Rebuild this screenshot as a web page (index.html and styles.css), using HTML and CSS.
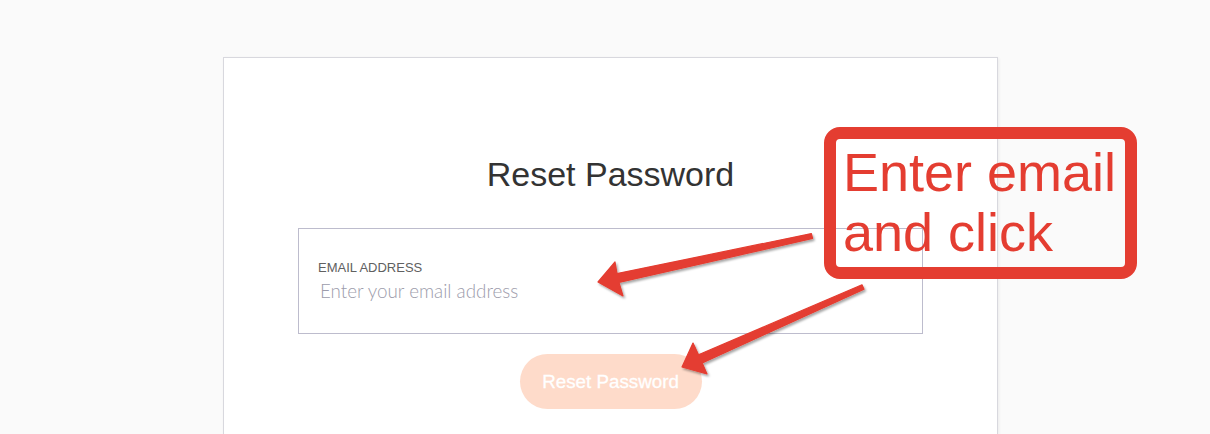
FILE: index.html
```html
<!DOCTYPE html>
<html>
<head>
  <title>Reset Password</title>
  <link rel="stylesheet" href="styles.css">
</head>
<body>
  <div class="card">
    <h1 class="title">Reset Password</h1>
    <div class="field">
      <label for="email" class="field-label">EMAIL ADDRESS</label>
      <input type="email" id="email" class="field-input" placeholder="Enter your email address">
    </div>
    <div class="actions">
      <button class="reset-button" disabled>Reset Password</button>
    </div>
  </div>

  <!-- annotation layer drawn over the screenshot -->
  <div class="callout">Enter email<br>and click</div>
  <svg class="arrows" width="1210" height="434" viewBox="0 0 1210 434">
    <defs>
      <filter id="shadow" x="-10%" y="-30%" width="130%" height="180%">
        <feDropShadow dx="1.5" dy="2" stdDeviation="1" flood-color="#000" flood-opacity="0.35"/>
      </filter>
    </defs>
    <g fill="#e43d31" stroke="#e43d31" stroke-width="1.2" stroke-linejoin="round" filter="url(#shadow)">
      <polygon points="598,282 615,262 617,273.6 811.4,233.6 812.6,238.4 619,282.4 623,296"/>
      <polygon points="682,367 693,343 698.5,354.8 862,284.8 864,289.2 702.2,363 707,374"/>
    </g>
  </svg>
</body>
</html>
```

FILE: styles.css
```css
:root {
  --page: #fafafa;
  --card-border: #d8d8de;
  --field-border: #bdbccd;
  --text: #333;
  --label: #606060;
  --placeholder: #9c9cab;
  --button: #fedbca;
  --marker: #e43d31;
}

html, body {
  height: 434px;
}

body {
  margin: 0;
  background-color: var(--page);
  font-family: "Liberation Sans", Arial, Helvetica, sans-serif;
  overflow: hidden;
}

.card {
  width: 775px;
  height: 377px;
  box-sizing: border-box;
  margin: 57px 0 0 223px;
  padding: 96px 74px 0 74px;
  background-color: white;
  border: 1px solid var(--card-border);
  border-bottom: none;
  box-shadow: 1px 1px 3px rgba(0, 0, 0, 0.06);
}

.title {
  margin: 0;
  font-size: 34px;
  line-height: 40px;
  font-weight: normal;
  text-align: center;
  color: var(--text);
}

.field {
  margin-top: 34px;
  height: 106px;
  box-sizing: border-box;
  padding: 31px 19px 0 19px;
  border: 1px solid var(--field-border);
  display: flex;
  flex-direction: column;
}

.field-label {
  font-size: 13px;
  line-height: 16px;
  color: var(--label);
}

.field-input {
  margin-top: 2px;
  padding: 0 0 0 2px;
  border: none;
  outline: none;
  background: transparent;
  font-family: Lato, "Liberation Sans", sans-serif;
  font-weight: 300;
  font-size: 18.8px;
  line-height: 26px;
  height: 26px;
  color: var(--text);
}

.field-input::placeholder {
  color: var(--placeholder);
}

.actions {
  display: flex;
  justify-content: center;
  margin-top: 20px;
}

.reset-button {
  width: 182px;
  height: 55px;
  border: none;
  border-radius: 28px;
  background-color: var(--button);
  color: white;
  font-family: "Liberation Sans", Arial, sans-serif;
  font-size: 18.8px;
  padding: 0;
  -webkit-text-stroke: 0.3px white;
}

.callout {
  position: absolute;
  left: 824px;
  top: 127px;
  width: 313px;
  height: 152px;
  box-sizing: border-box;
  border: 12px solid var(--marker);
  border-radius: 16px;
  padding: 3px 0 0 7px;
  color: var(--marker);
  font-size: 54px;
  line-height: 60px;
  white-space: nowrap;
}

.arrows {
  position: absolute;
  left: 0;
  top: 0;
}
```
